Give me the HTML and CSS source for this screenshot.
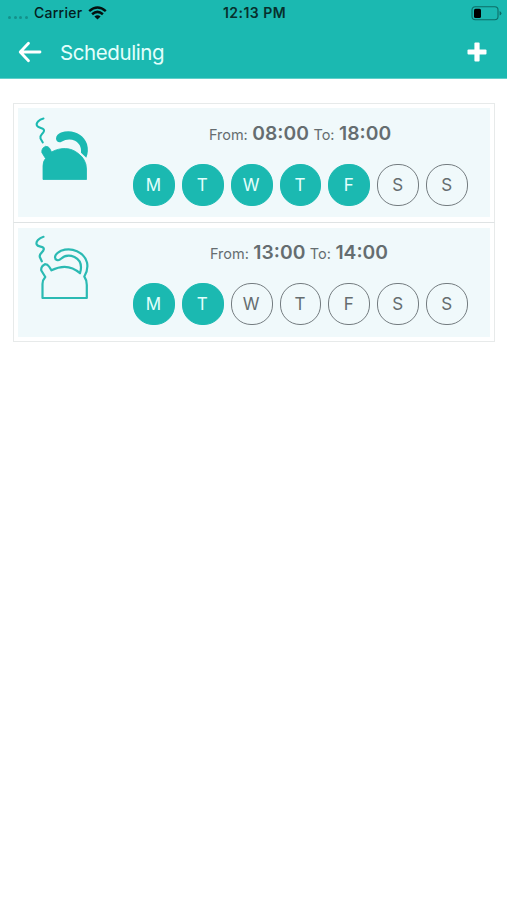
FILE: index.html
```html
<!DOCTYPE html>
<html lang="en">
<head>
<meta charset="utf-8">
<title>Scheduling</title>
<link rel="stylesheet" href="styles.css">
</head>
<body>
<header class="header">
  <div class="status">
    <div class="carrier">
      <span class="dots"><i></i><i></i><i></i><i></i></span>
      <span class="carrier-name">Carrier</span>
      <svg class="wifi" width="19" height="14" viewBox="0 0 19 14"><g fill="none" stroke="#04110f" stroke-width="2.5"><path d="M1.2 5.1Q9.5-2 17.8 5.1"/><path d="M4.1 8.2Q9.5 3.6 14.9 8.2"/></g><path d="M6.4 10.4Q9.5 8 12.6 10.4L9.5 13.6Z" fill="#04110f"/></svg>
    </div>
    <time class="clock">12:13 PM</time>
    <svg class="battery" width="31" height="15" viewBox="0 0 31 15"><rect x="1" y=".8" width="26" height="12.9" rx="3.2" fill="none" stroke="#0d6d67" stroke-width="1.1"/><rect x="3" y="2.7" width="7" height="9.2" rx="1.5" fill="#000"/><path d="M28.6 5v4.6q1.8-.7 1.8-2.3T28.600 5Z" fill="#0d6d67"/></svg>
  </div>
  <nav class="nav">
    <svg class="back" width="24" height="22" viewBox="0 0 24 22"><path d="M10.500 2.200 2.200 11l8.300 8.800M2.500 11H22" fill="none" stroke="#fff" stroke-width="2.800" stroke-linecap="round" stroke-linejoin="round"/></svg>
    <h1 class="title">Scheduling</h1>
    <svg class="add" width="20" height="20" viewBox="0 0 20 20"><rect x="7.400" y="0.500" width="5.200" height="19" rx="1" fill="#fff"/><rect x="0.500" y="7.400" width="19" height="5.200" rx="1" fill="#fff"/></svg>
  </nav>
</header>
<main class="list">
  <article class="card">
    <div class="panel">
      <svg class="kettle" width="75" height="85" viewBox="0 0 75 85"><path d="M18.500 13.500C14 14.500 10.500 18 12 20.800S20 22.500 19 26 14.500 29.500 15.500 33.500L17.800 37.500" fill="none" stroke="#1bb9b1" stroke-width="2" stroke-linecap="round" stroke-linejoin="round"/><path d="M18 74.500V61Q18 56 20.500 53.500L16.800 47.500Q16.400 45 18 43L20.500 41.300Q23.500 41.300 24.800 43.500L26.500 47C35.500 42 46 42.300 53 48.300Q61.500 54.500 61.500 64V74.500Z" fill="#1bb9b1" stroke="#1bb9b1" stroke-width=".8" stroke-linejoin="round"/><path d="M36.500 36.800C34 38.300 31 36.500 31 33.500 31 30.500 33.500 28.500 36 27.500C47 23.500 58.500 29 62 39C63.500 44 63 48.500 61.300 52.700L56 47.800C56.500 42 54.500 38.200 50 35.700Q43 32.800 36.500 36.800Z" fill="#1bb9b1"/></svg>
      <div class="details">
        <p class="hours"><span>From:</span> <b>08:00</b> <span>To:</span> <b>18:00</b></p>
        <div class="days"><span class="day on">M</span><span class="day on">T</span><span class="day on">W</span><span class="day on">T</span><span class="day on">F</span><span class="day">S</span><span class="day">S</span></div>
      </div>
    </div>
  </article>
  <article class="card">
    <div class="panel">
      <svg class="kettle" width="75" height="85" viewBox="0 0 75 85"><g fill="none" stroke="#2bbab3" stroke-width="2.200" stroke-linecap="round" stroke-linejoin="round"><path d="M18.500 11.800C14 13 10.500 16.500 11.700 19.500S19.500 20.800 18.800 24.300 14 28 14.800 32L16.800 36.300"/><path d="M17.500 73V59Q17.500 55 20.300 52L16.300 45.500Q15.800 43 17.500 41L20 39.200Q22.500 39.200 24 41.500L26.500 45.300C36 40.500 46.500 40.500 55 48.300C57.500 40 55.500 35 49.500 32 43.500 29.500 39 31 36 33.800 33 36.800 30 34.500 30 32.200 30.300 28.800 34 26.800 36 25.800C47 21.800 59 27 62 37.500Q63.500 44.500 59.300 51.500Q61.800 55 61.800 60V73Z"/></g></svg>
      <div class="details">
        <p class="hours"><span>From:</span> <b>13:00</b> <span>To:</span> <b>14:00</b></p>
        <div class="days"><span class="day on">M</span><span class="day on">T</span><span class="day">W</span><span class="day">T</span><span class="day">F</span><span class="day">S</span><span class="day">S</span></div>
      </div>
    </div>
  </article>
</main>
</body>
</html>
```
FILE: styles.css
```css
* { box-sizing: border-box; }
body { margin: 0; min-height: 900px; background: #fff; color: #656d70; font-family: Inter, "Liberation Sans", sans-serif; }
.header { height: 79px; background: #1bb9b1; border-bottom: 1px solid #61cfca; }
.status { height: 26px; display: grid; grid-template-columns: 1fr auto 1fr; align-items: center; padding: 0 6px 0 8px; color: #07302d; }
.carrier { display: flex; align-items: center; }
.dots { display: flex; gap: 2.600px; width: 26px; padding-top: 8px; }
.dots i { width: 3px; height: 3px; border-radius: 50%; background: #14918b; }
.carrier-name { font-size: 14px; font-weight: 500; letter-spacing: .25px; width: 54px; color: #04201e; }
.carrier-name, .clock { line-height: 16px; margin-top: -1px; }
.clock { font-size: 14px; font-weight: 600; letter-spacing: .45px; }
.battery { justify-self: end; margin-right: -1px; }
.nav { height: 52px; display: flex; align-items: center; padding: 0 20px 0 18px; }
.title { margin: 1px auto 0 18px; font-size: 20.500px; font-weight: 400; letter-spacing: -.4px; line-height: 26px; color: #e4fffc; }
.list { padding: 24px 12px 0 13px; }
.card { border: 1px solid #e7eaea; padding: 4px; height: 120px; }
.card + .card { margin-top: -1px; padding-top: 5px; border-top: 1px solid #dfe3e4; }
.panel { height: 109px; display: flex; background: #f0f9fb; }
.kettle { margin: -3px 0 0 7px; flex: none; }
.details { margin-left: 33px; width: 335px; }
.card + .card .details { margin-top: -1px; }
.hours { margin: 12px 0 0; padding-right: 1px; height: 26px; line-height: 26px; font-size: 14.500px; word-spacing: .4px; text-align: center; white-space: nowrap; }
.card + .card .hours { padding-right: 3px; }
.hours b { font-size: 19.300px; font-weight: 600; }
.days { display: flex; gap: 7px; margin-top: 17.500px; }
.day { width: 42px; height: 42px; border: 1.300px solid #747c80; border-radius: 20px; display: flex; align-items: center; justify-content: center; padding-right: 1px; font-size: 17px; line-height: 20px; }
.day.on { background: #1bb9b1; border-color: #1bb9b1; color: #e4fffc; }
```
